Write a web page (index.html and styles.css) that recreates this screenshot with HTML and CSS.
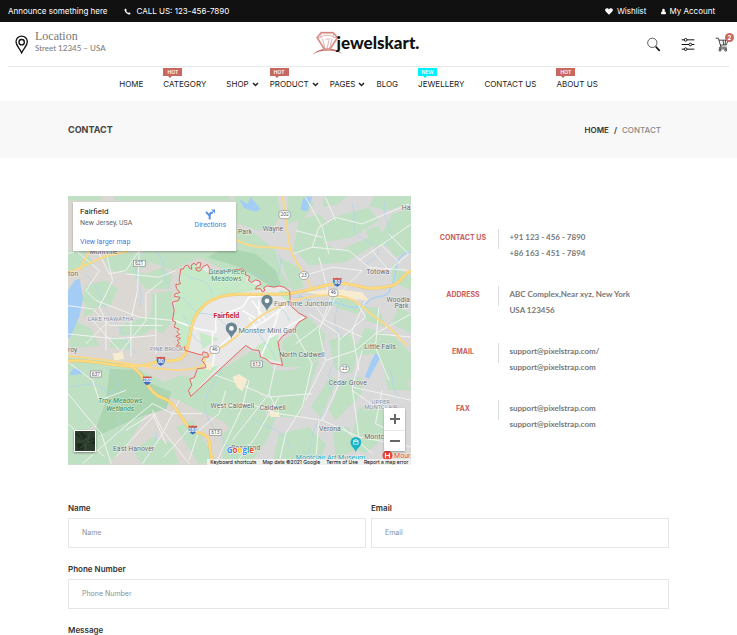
FILE: index.html
```html
<!DOCTYPE html>
<html lang="en">
<head>
<meta charset="utf-8">
<meta name="viewport" content="width=device-width, initial-scale=1">
<title>Contact - jewelskart.</title>
<link rel="stylesheet" href="styles.css">
</head>
<body>
<div class="topbar">
  <span>Announce something here</span>
  <a class="call" href="#call"><svg class="i-phone" viewBox="0 0 14 14"><path d="M3.500.8 1 2.300C.8 7.500 6.500 13.200 11.800 13l1.500-2.600-3.200-2-1.700 1.400C6.600 8.900 5.100 7.400 4.300 5.700L5.600 4z" fill="#fff"/></svg>CALL US: 123-456-7890</a>
  <a class="wish" href="#wishlist"><svg class="i-heart" viewBox="0 0 16 14"><path d="M8 13.500 1.500 7C-1 4 .8.5 4 .5 6 .5 7.300 1.600 8 2.800 8.700 1.600 10 .5 12 .5c3.200 0 5 3.500 2.500 6.500z" fill="#fff"/></svg>Wishlist</a>
  <a class="account" href="#account"><svg class="i-user" viewBox="0 0 12 14"><path d="M6 .5a3.300 3.300 0 0 1 2 5.900c2.500.4 4 2.600 4 5 0 1.400-.8 2.100-2 2.100H2c-1.200 0-2-.7-2-2.100 0-2.400 1.500-4.600 4-5A3.300 3.300 0 0 1 6 .5z" fill="#fff"/></svg>My Account</a>
</div>

<header class="header">
  <div class="location">
    <svg class="i-pin" viewBox="45 105 42 56" fill="none" stroke="#111" stroke-width="4"><path d="M65 158C60 145 48 137 48 125a17 17 0 0 1 34 0c0 12-12 20-17 33z"/><circle cx="65" cy="126" r="8"/></svg>
    <div>
      <div class="loc-title">Location</div>
      <div class="loc-text">Street 12345 – USA</div>
    </div>
  </div>
  <a class="logo" href="#home">
    <svg class="i-ring" viewBox="33 20 92 72" fill="none" stroke="#c9685f" stroke-width="2">
      <path d="M34 91C55 69 102 67 124 89 101 75 57 75 34 91z" fill="#c9685f" stroke="none"/>
      <path d="M60 25h36l13 15-23 35H70L48 40z" stroke="#e3b1ac" stroke-width="6"/>
      <path d="M60 25h36l13 15-23 35H70L48 40z"/>
      <path d="M60 30l-1 9-9 2M96 30l1 9 10 1M59 39l9-6h21l8 6M64 43l8 30M93 43l-8 30M83 48l-5 24M73 44h14" stroke="#d58a83"/>
    </svg><span>jewelskart.</span>
  </a>
  <div class="tools">
    <button type="button" aria-label="Search"><svg viewBox="502 110 42 44" fill="none" stroke="#111"><circle cx="518" cy="127" r="14" stroke-width="2"/><path d="m528 138 12 13" stroke-width="5"/></svg></button>
    <button type="button" aria-label="Settings"><svg viewBox="604 110 42 44" fill="none" stroke="#111" stroke-width="3"><path d="M606 118h8M622 118h22M606 132h22M637 132h7M606 146h8M622 146h22"/><circle cx="618" cy="118" r="4"/><circle cx="632" cy="132" r="4"/><circle cx="618" cy="146" r="4"/></svg></button>
    <button type="button" aria-label="Cart"><svg viewBox="706 110 42 44" fill="none" stroke="#222" stroke-width="2.500"><path d="M708 113h8l8 27h17M718 119h27l-5 14-18 1M724 140q-7-1-4 5h22M730 119l2 14M738 119l-2 14"/><circle cx="721" cy="149" r="3"/><circle cx="738" cy="149" r="3"/></svg><span class="count">2</span></button>
  </div>
</header>

<nav class="nav">
  <ul>
    <li><a href="#home">HOME</a></li>
    <li><span class="tag">HOT</span><a href="#category">CATEGORY</a></li>
    <li class="more"><a href="#shop">SHOP<svg viewBox="0 0 7 5"><path d="m1 1 2.500 2.500L6 1" fill="none" stroke="#222" stroke-width="1.500"/></svg></a></li>
    <li class="more"><span class="tag">HOT</span><a href="#product">PRODUCT<svg viewBox="0 0 7 5"><path d="m1 1 2.500 2.500L6 1" fill="none" stroke="#222" stroke-width="1.500"/></svg></a></li>
    <li class="more"><a href="#pages">PAGES<svg viewBox="0 0 7 5"><path d="m1 1 2.500 2.500L6 1" fill="none" stroke="#222" stroke-width="1.500"/></svg></a></li>
    <li><a href="#blog">BLOG</a></li>
    <li><span class="tag new">NEW</span><a href="#jewellery">JEWELLERY</a></li>
    <li><a href="#contact">CONTACT US</a></li>
    <li><span class="tag">HOT</span><a href="#about">ABOUT US</a></li>
  </ul>
</nav>

<div class="crumbs">
  <h1>CONTACT</h1>
  <div class="trail"><a href="#home">HOME</a><span class="slash">/</span><span class="here">CONTACT</span></div>
</div>

<main>
  <section class="info">
    <div class="map">
      <svg class="map-art" viewBox="6 6 1032 807" preserveAspectRatio="xMidYMid slice">
        <defs>
          <g id="shield"><path d="M-12-7Q-15 7 0 14 15 7 12-7z" fill="#3f6fc0"/><path d="M-13-13q6 2 13 0 7 2 13 0v6h-26z" fill="#d6534c"/></g>
          <g id="pin"><path d="M0 26C-4 10-17 8-17-6a17 17 0 0 1 34 0C17 8 4 10 0 26z" fill="#6b8592"/><circle cy="-5" r="7" fill="#fff"/></g>
          <path id="town" d="M345 225L352 226 358 216 366 214 372 224 378 226 376 214 385 208 392 214 396 206 405 207 402 222 390 222 392 230 402 232 412 218 425 212 432 225 430 240 455 238 505 228 530 225 540 234 538 242 552 248 548 260 558 266 570 258 582 262 585 272 572 278 570 286 584 284 590 294 598 290 594 282 604 276 625 280 640 276 655 280 672 292 674 335 700 358 724 371 700 385 688 402 670 414 650 428 637 445 645 490 651 515 615 508 600 495 585 490 580 470 560 468 540 455 375 608 368 590 378 575 372 556 385 552 395 525 420 522 418 512 408 500 414 490 428 490 426 478 412 474 410 484 400 482 358 470 356 458 346 464 344 456 332 458 340 446 334 440 344 434 330 428 342 422 334 414 340 406 325 400 330 385 320 380 325 350 320 325 338 320 342 310 326 308 328 300 342 296 332 284 330 272 344 270 340 258z"/>
        </defs>
        <rect width="1050" height="830" fill="#dbd8d4"/>
        <path d="M540 0h510v830H540z" fill="#d9d9d9"/>
        <g fill="#c0e0c3">
          <path d="M0 0h120l-20 20H0zM140 0h340l20 20H150zM505 0h130l10 60-20 40-50 10-65-25zM665 0h60l20 30-30 45-50 15zM780 0h70l-30 30-50 10zM930 0h110v30l-80 20-50-15zM700 80l60-20 30 30-20 60-90 30zM800 70l110-30 30 40-80 50-110 20zM980 60l58-20v70l-60 40-50 10zM690 170l70-30 60 30 90-40 30 15-100 60-110 10zM960 150l78-40v60l-50 20z"/>
          <path d="M510 100l60 20 60 50 20 70 25 40-60 5-60-40-100-70 60-5zM230 170h280l120 110-20 10-90-40-120-60-80 40-80-30zM640 190l60 30 15 60-35 10zM790 300l60 10 60 30-40 20-60-20zM980 210l58 40v40l-60-30zM900 110l40-15 20 40-40 20z"/>
          <path d="M6 170h50l30 40-80 30zM110 185l60-15 70 10 10 30-50 30-70-10zM60 275l60-15 35 25-20 50-60 10-30-25zM190 230l50 10 50-20 30 25-10 40-70 0zM260 300l60-10 0 90-30 40-40-20zM6 370l70 35 25 50-90 10zM60 330l30 0-10 30-30 10zM160 395l90-30 20 30-40 30-70 0zM140 430l60 10-10 30-60-10z"/>
          <path d="M6 490l120 10 90 25 80 40 50-20 90 20 110 0 60 60-10 80-60 60-60-80-70-30-120-60-60 30-90 40-120 70H6zM6 730l120-30 50-50 60 20-50 80-60 63H6zM200 770l60-40 60 20 20 63H230zM330 700l50-20 70 120-50 13zM30 500l70 0 40 50-90 20z"/>
          <path d="M430 550l130-80 60 50 50 90-90-10-50-40-60 60-80-20zM650 440l70-40 60 20-10 70-60 30-60 0zM600 530l80 0 80-30-30 90-30 80-80 0-30-70zM670 380l60-10 40 40-60 40zM470 720l90-60 70 10-20 60-60 83H470zM640 720l90-20 50 50-20 63H620zM735 640l60-90 20 10-50 110z"/>
          <path d="M790 440l60-20 30 40-20 80-50-10zM830 560l60-10 0 50-80 80-20-30zM900 400l90 30 48 50v80l-70-20-40-60-70 10zM950 510l60 0 28 80-70 0zM880 640l70 0 10 90-60 50-50-20zM800 700l50 0 20 70-60 20zM1000 340l38 20v60l-60-30zM900 340l40 0 20 60-60-20z"/>
        </g>
        <path d="M132 525l90 5 35 40 60 25-15 50-95 30-108 50-10-20 30-80zM480 160l90 20 60 50 15 40-25 10-40-25-25-15-30-20-100-30z" fill="#acd5b1"/>
        <path d="M6 290l20-30 15-5 10 60-10 50-25 60-10 10zM520 15l25 15 10-20 30 35-15 8-35-10zM712 12l28-5-15 45-20-5zM930 478l15 12-35 65-12-5 20-50zM20 525l20 0 10 15-40 5z" fill="#a3cdf4"/>
        <g fill="none" stroke="#a9d2f5" stroke-width="2">
          <path d="M60 240c50 50 40 90 85 140s30 80 70 100M220 180c-30 70 20 100 0 160M270 170c40 50 10 80 50 120M120 520c30 30 60 80 40 120s20 50-10 90M470 520c-20 60-60 70-50 130s50 60 90 160M560 670c30 40 90 20 110 90M720 810c20-50 10-100 60-160s-20-80 30-150M640 180c20 50-30 80 10 110M860 30c20 60-20 80 40 110s40 50 0 70M960 20c-20 60 40 80 0 140M560 240c60 10 90 80 150 70M830 320c-30 40-30 90 10 120M960 520c40 20 0 80 60 100M6 580l80-10 50 30 30-40M240 800c10-40 40-50 30-90"/>
          <path d="M1038 175c-60 0-40 80-60 100-10 50-50 20-70 50-60 40-80-10-120 0-40 10-60-10-90-20" stroke-width="4"/>
        </g>
        <g fill="none" stroke="#f2f2f1" stroke-width="3">
          <path d="M0 180l90-20 40 80 50-10 40-60M30 170l70 60-40 60 30 30 130 50 100 10M120 170l20 90-40 80 20 40 0 90M220 170l-5 120-20 90 0 110M0 335l80 10 50 50 160 0M60 450l60-60M180 240l100 10 50-20M270 300l0 180M160 480l80-100 0-80 50-40M80 380l80 90M0 420l150 15 120-10M0 500l80 60 20 60 80-30M6 600l100 120 30 90M6 690l110 100M50 810l160-140 50-40 60 30 90 0M260 650l30 60 80 100M180 710l80-50 40 90M340 620l-50 100-60 90M375 700l-80 90M150 790l120-130"/>
          <path d="M410 530l110 40 90 40 130-10M480 590l-20 70-60 50-30 90M550 560l-20 80-80 170M450 640l100-10 90 30 130 20 110 50 158 30M640 660l-30-60 20-90M610 600l-110 140M640 610l-70 120-60 80M690 420l50 90-30 130-50 80-20 90M720 620l60-120 90-30 60-50 108 10M780 500l-20-90 40-110M770 680l50-110 0-150-90-60M880 730l-20-150 30-110M930 640l-70-50M860 580l178 40M760 680l-10 130M830 700l90 80M950 590l-20 100 60 30"/>
          <path d="M680 180l60-20 20-60 50-30 80 20 140-60M740 160l110 10 60 50 128 10M760 190l30 110M790 180l-20-80-50-90M810 80l-30-70M880 200l158-110M920 170l50 60 60-50M945 150l60 60M970 120l60 60M690 110l80 20M700 250l100-30 90 10-80 80-40 80-80 60M740 320l40 60 110 50M860 300l40 70-80 70M900 320l-40 90 20 120M940 340l-10 120 40 100M1038 360l-110 60"/>
        </g>
        <use href="#town" fill="#e8e8e8"/>
        <path d="M345 225L385 208 430 240 530 225 545 245 540 262 600 285 500 300 430 325 385 380 365 465 335 460 342 415 322 380 325 350 335 295 331 270 345 270zM395 525l65-10-85 90-7-15 17-38zM570 460l65-40 10 85-45-10-20-25zM400 415l60 20-50 30zM640 290l32 2 0 40-30-30z" fill="#c6e9c8"/>
        <g fill="none" stroke="#fafafa" stroke-width="5"><path d="M325 380l70 25 55 10 0-45 80-30 20-30 110-10M440 415l0 60 60-50M440 520l6-40M500 435l100-55 80-60M585 490l40-90 15-50M550 370l25 40M530 350l50 30 0-60M615 430l100-60M560 320l40 60"/></g>
        <g fill="none" stroke="#add3f2" stroke-width="2"><path d="M340 310c40 10 30 50 80 50s40 40 90 40M350 360c30 40 20 70 60 90M580 420c20 40 40 40 50 80M600 310c40 40 60 30 70 70M360 240c30 30 60 0 80 60"/></g>
        <path d="M500 550l20-8 25 15-15 35-15-10zM140 480l30-5 5 20-30 5zM720 295l80-10 90 10 20 25-110-10zM610 655l25 0 10 15-30 0zM415 505l25 5-5 20-20-5z" fill="#f8ecd0"/>
        <g fill="none" stroke="#ecc36d" stroke-width="9"><path d="M6 502c70-8 130 18 200 15s50-20 110-16c50 0 50-40 60-95s50-105 145-105h120c80 0 130-35 190-32s50 20 120 12 50-38 87-50"/><path d="M180 513c60 15 60 85 110 100s60 95 110 105 20 50 45 92"/></g>
        <g fill="none" stroke="#fbda80" stroke-width="7"><path d="M6 502c70-8 130 18 200 15s50-20 110-16c50 0 50-40 60-95s50-105 145-105h120c80 0 130-35 190-32s50 20 120 12 50-38 87-50"/><path d="M180 513c60 15 60 85 110 100s60 95 110 105 20 50 45 92"/></g>
        <g fill="none" stroke="#f9d88a" stroke-width="6"><path d="M6 487c70 5 130 15 180 22s110 25 180 18 40-30 60-42 45-22 90-60 60-60 120-85 100-38 170-35 90 45 140 78 60 60 82 73M510 137c60 35 100 15 165 30M650 6c15 60 10 110 25 160s50 70 60 120M6 238l110-50 70-15M40 230l30-60"/></g>
        <use href="#town" class="outline"/>
        <g class="lbl">
          <text x="538" y="119">Park</text><text x="622" y="111">Wayne</text><text x="1022" y="47">Ha</text><text x="937" y="239">Totowa</text><text x="998" y="324">Woodla</text><text x="1008" y="344">Park</text><text x="944" y="466">Little Falls</text><text x="709" y="491">North Caldwell</text><text x="847" y="573">Cedar Grove</text><text x="500" y="642">West Caldwell</text><text x="621" y="648">Caldwell</text><text x="793" y="711">Verona</text><text x="926" y="736">Montc</text><text x="540" y="768">Roseland</text><text x="203" y="772">East Hanover</text><text x="113" y="179">Montville</text><text x="21" y="246">ton</text><text x="20" y="475">roy</text>
        </g>
        <g class="lbl area"><text x="134" y="381">LAKE HIAWATHA</text><text x="303" y="472">PINE BROOK</text><text x="946" y="630">UPPER</text><text x="946" y="645">MONTCLAIR</text></g>
        <g class="lbl park"><text x="482" y="239">Great Piece</text><text x="482" y="262">Meadows</text></g>
        <g class="lbl wet"><text x="163" y="629">Troy Meadows</text><text x="163" y="652">Wetlands</text></g>
        <text class="lbl town-name" x="482" y="373">Fairfield</text>
        <g class="lbl poi"><text x="625" y="336">FunTime Junction</text><text x="518" y="419">Monster Mini Golf</text></g>
        <text class="lbl museum" x="795" y="799">Montclair Art Museum</text>
        <text class="lbl hospital" x="986" y="792">Mour</text>
        <use href="#pin" x="604" y="326"/><use href="#pin" x="497" y="409"/>
        <path d="M871 776c-4-14-16-16-16-30a16 16 0 0 1 32 0c0 14-12 16-16 30z" fill="#15b3c6"/><path d="M863 742l8-5 8 5zM864 744h14v8h-14z" fill="none" stroke="#fff" stroke-width="2"/>
        <circle cx="966" cy="786" r="15" fill="#e8453c"/><path d="M960 778v16M972 778v16M960 786h12" stroke="#fff" stroke-width="3"/>
        <use href="#shield" x="285" y="502"/><use href="#shield" x="815" y="265"/><use href="#shield" x="244" y="561"/><use href="#shield" x="381" y="709"/>
        <g fill="#fff" stroke="#888" stroke-width="2"><rect x="203" y="200" width="35" height="17"/><rect x="73" y="532" width="34" height="18"/><rect x="556" y="502" width="34" height="18"/><rect x="432" y="708" width="34" height="18"/><rect x="640" y="50" width="34" height="24" rx="9"/><ellipse cx="715" cy="245" rx="14" ry="12"/><ellipse cx="837" cy="525" rx="14" ry="12"/><rect x="433" y="457" width="28" height="22" rx="8"/><rect x="789" y="286" width="28" height="22" rx="8"/></g>
        <g class="num"><text x="220" y="214">621</text><text x="90" y="546">637</text><text x="573" y="517">613</text><text x="449" y="722">613</text><text x="657" y="67">202</text><text x="715" y="250">23</text><text x="837" y="530">23</text><text x="447" y="473">46</text><text x="803" y="302">46</text></g>
        <g class="num inv"><text x="285" y="507">80</text><text x="815" y="270">80</text><text x="244" y="566">280</text><text x="381" y="714">280</text></g>
        <text class="google" x="483" y="779"><tspan fill="#4285f4">G</tspan><tspan fill="#ea4335">o</tspan><tspan fill="#fbbc05">o</tspan><tspan fill="#4285f4">g</tspan><tspan fill="#34a853">l</tspan><tspan fill="#ea4335">e</tspan></text>
      </svg>
      <div class="card">
        <div>
          <div class="place">Fairfield</div>
          <div class="state">New Jersey, USA</div>
          <a href="#larger">View larger map</a>
        </div>
        <a class="directions" href="#directions"><svg viewBox="0 0 30 32" fill="none" stroke="#5b93e6"><path d="M14 31V20L3 8M14 20c0-7 5-10 10-10" stroke-width="6"/><path d="M19 1h11v13z" fill="#5b93e6" stroke="none"/></svg>Directions</a>
      </div>
      <button class="satellite" type="button" aria-label="Satellite view"><svg viewBox="0 0 60 60"><path d="M0 0h60v60H0z" fill="#2b3b2c"/><path d="M0 10l20-8 15 14-10 12zM40 30l20-12v25zM5 40l15-6 8 20-18 4z" fill="#1d2c20"/><path d="M5 30l15 5 10-12 12 10 14-5M30 60l4-26M10 5l12 16M45 5L38 28M14 52l18-12" stroke="#4a5846" stroke-width="2" fill="none"/></svg></button>
      <div class="zoom">
        <button type="button" aria-label="Zoom in"><svg viewBox="0 0 10 10"><path d="M5 0v10M0 5h10" stroke="#666" stroke-width="2"/></svg></button>
        <button type="button" aria-label="Zoom out"><svg viewBox="0 0 10 10"><path d="M0 5h10" stroke="#666" stroke-width="2"/></svg></button>
      </div>
      <div class="credits"><a href="#keys">Keyboard shortcuts</a><span>Map data ©2021 Google</span><a href="#terms">Terms of Use</a><a href="#report">Report a map error</a></div>
    </div>
    <dl class="details">
      <div><dt>CONTACT US</dt><dd>+91 123 - 456 - 7890<br>+86 163 - 451 - 7894</dd></div>
      <div><dt>ADDRESS</dt><dd>ABC Complex,Near xyz, New York<br>USA 123456</dd></div>
      <div><dt>EMAIL</dt><dd>support@pixelstrap.com/<br>support@pixelstrap.com</dd></div>
      <div><dt>FAX</dt><dd>support@pixelstrap.com<br>support@pixelstrap.com</dd></div>
    </dl>
  </section>

  <form class="form">
    <div class="field"><label for="name">Name</label><input id="name" type="text" placeholder="Name"></div>
    <div class="field"><label for="email">Email</label><input id="email" type="email" placeholder="Email"></div>
    <div class="field wide"><label for="phone">Phone Number</label><input id="phone" type="tel" placeholder="Phone Number"></div>
    <div class="field wide"><label for="message">Message</label><textarea id="message" rows="6"></textarea></div>
  </form>
</main>
</body>
</html>
```
FILE: styles.css
```css
* { box-sizing: border-box; }
body {
  margin: 0;
  background: #fff;
  color: #222;
  font: 8px/12px Inter, "Open Sans", sans-serif;
}
a { color: inherit; text-decoration: none; }
button { padding: 0; border: 0; background: none; }
svg { display: block; }

.topbar {
  display: flex;
  align-items: center;
  height: 22px;
  padding: 0 22px 0 8px;
  background: #111;
  color: #fff;
}
.topbar a { display: flex; align-items: center; }
.call { margin-left: 16px; gap: 6px; }
.wish { margin-left: auto; gap: 4px; }
.account { margin-left: 15px; gap: 3px; }
.i-phone { width: 7px; height: 7px; }
.i-heart { width: 8px; height: 7px; }
.i-user { width: 5px; height: 7px; }

.header {
  display: grid;
  grid-template-columns: 1fr auto 1fr;
  align-items: center;
  height: 45px;
  margin: 0 8px;
  border-bottom: 1px solid #e8e8e8;
}
.location { display: flex; align-items: center; gap: 6px; padding-left: 7px; }
.i-pin { width: 14px; height: 19px; }
.loc-title { font: 12px/12px "Liberation Serif", serif; color: #777; }
.loc-text { font: 8px/12px Lato, sans-serif; color: #777; }
.location > div { padding-bottom: 4px; }
.logo { display: flex; align-items: center; margin-right: 6px; padding-bottom: 3px; color: #111; }
.logo span { margin-left: -6px; font: 900 17px/20px Lato, sans-serif; }
.i-ring { width: 31px; height: 24px; }
.tools { display: flex; justify-content: flex-end; gap: 20px; }
.tools button { position: relative; }
.tools svg { width: 14px; height: 15px; }
.count {
  position: absolute;
  top: -4px;
  right: -5px;
  width: 9px;
  height: 9px;
  border-radius: 50%;
  background: #c9685f;
  color: #fff;
  font: 700 6px/9px Inter, sans-serif;
  text-align: center;
}

.nav ul {
  display: flex;
  justify-content: center;
  height: 34px;
  margin: 0;
  padding: 11px 0 0;
  list-style: none;
}
.nav li { position: relative; padding-right: 20px; }
.nav .more { padding-right: 11px; }
.nav a { display: flex; align-items: center; }
.nav a svg { width: 7px; height: 5px; margin-left: 3px; }
.tag {
  position: absolute;
  top: -10px;
  left: 0;
  width: 19px;
  height: 8px;
  background: #c9685f;
  color: #fff;
  font: 600 5px/8px Inter, sans-serif;
  text-align: center;
}
.tag::after {
  content: "";
  position: absolute;
  top: 8px;
  left: 5px;
  border: 2px solid transparent;
  border-top-color: #c9685f;
  border-bottom: 0;
}
.new { background: #00f0ff; }
.new::after { border-top-color: #00f0ff; }

.crumbs {
  display: flex;
  align-items: center;
  justify-content: space-between;
  height: 57px;
  padding: 0 76px 0 68px;
  background: #f8f8f8;
}
.crumbs h1 { margin: 0; font-size: 9px; font-weight: 700; color: #444; }
.trail { display: flex; font-weight: 600; color: #333; }
.slash { margin: 0 5px; }
.here { font-weight: 500; color: #888; }

main { padding: 38px 68px 20px; }
.info { display: grid; grid-template-columns: 4fr 3fr; }
.map { position: relative; overflow: hidden; aspect-ratio: 344 / 269; }
.map-art { width: 100%; height: 100%; }
.outline { fill: none; stroke: #e2645c; stroke-width: 3; }
.lbl {
  font: 21px Roboto, sans-serif;
  fill: #666;
  stroke: #fff;
  stroke-width: 3;
  stroke-opacity: .7;
  paint-order: stroke;
  text-anchor: middle;
}
.area { font-size: 18px; fill: #7c8ba3; }
.park { fill: #48885a; }
.wet { fill: #43975a; font-style: italic; font-weight: 500; }
.town-name { fill: #c5221f; font-weight: 700; }
.poi { font-size: 22px; fill: #607984; text-anchor: start; }
.museum { fill: #12a5b8; }
.hospital { fill: #e0443c; text-anchor: start; }
.num { font: 15px Roboto, sans-serif; fill: #555; text-anchor: middle; }
.inv { fill: #fff; font-weight: 700; }
.google { font: 700 24px "Open Sans", sans-serif; stroke: #fff; stroke-width: 3; paint-order: stroke; }

.card {
  position: absolute;
  top: 6px;
  left: 5px;
  display: flex;
  justify-content: space-between;
  width: 163px;
  height: 49px;
  padding: 4px 10px 0 7px;
  background: #fff;
  box-shadow: 0 1px 2px rgba(0, 0, 0, .3);
  font: 7px/10px Roboto, sans-serif;
  color: #666;
}
.place { font-size: 8px; line-height: 12px; color: #111; }
.card a { color: #3f7de0; }
.state { margin-bottom: 9px; }
.directions { display: flex; flex-direction: column; align-items: center; padding-top: 3px; }
.directions svg { width: 10px; height: 11px; }
.satellite {
  position: absolute;
  bottom: 13px;
  left: 6px;
  width: 22px;
  height: 22px;
  border: 1px solid #fff;
  box-shadow: 0 1px 2px rgba(0, 0, 0, .4);
}
.satellite svg { width: 20px; height: 20px; }
.zoom {
  position: absolute;
  right: 6px;
  bottom: 14px;
  width: 21px;
  background: #fff;
  box-shadow: 0 1px 2px rgba(0, 0, 0, .3);
}
.zoom button { display: grid; place-items: center; width: 100%; height: 22px; }
.zoom button + button { height: 21px; border-top: 1px solid #e6e6e6; }
.zoom svg { width: 10px; height: 10px; }
.credits {
  position: absolute;
  right: 0;
  bottom: 0;
  display: flex;
  gap: 6px;
  padding: 0 3px;
  background: rgba(245, 245, 245, .8);
  color: #000;
  font: 5px/6px Inter, sans-serif;
}

.details { margin: 0; padding: 33px 0 0 16px; }
.details > div { display: flex; margin-bottom: 25px; }
.details dt {
  width: 72px;
  height: 20px;
  border-right: 1px solid #ddd;
  color: #c9605b;
  font-size: 7px;
  font-weight: 700;
  line-height: 18px;
  text-align: center;
}
.details dd {
  margin: 0 0 0 10px;
  color: #777;
  font: 700 8px/16px Lato, sans-serif;
}

.form { display: grid; grid-template-columns: 1fr 1fr; gap: 15px 5px; margin-top: 37px; }
.field { display: flex; flex-direction: column; }
.wide { grid-column: 1 / -1; }
.field label { margin-bottom: 4px; font-weight: 600; color: #333; }
.field input, .field textarea {
  width: 100%;
  height: 30px;
  padding: 0 13px;
  border: 1px solid #e6e6e6;
  border-radius: 0;
  background: #fff;
  color: #222;
  font: 7px/12px Inter, "Open Sans", sans-serif;
}
.field textarea { height: auto; padding: 9px 13px; }
::placeholder { color: #8a8f96; opacity: 1; }
```
